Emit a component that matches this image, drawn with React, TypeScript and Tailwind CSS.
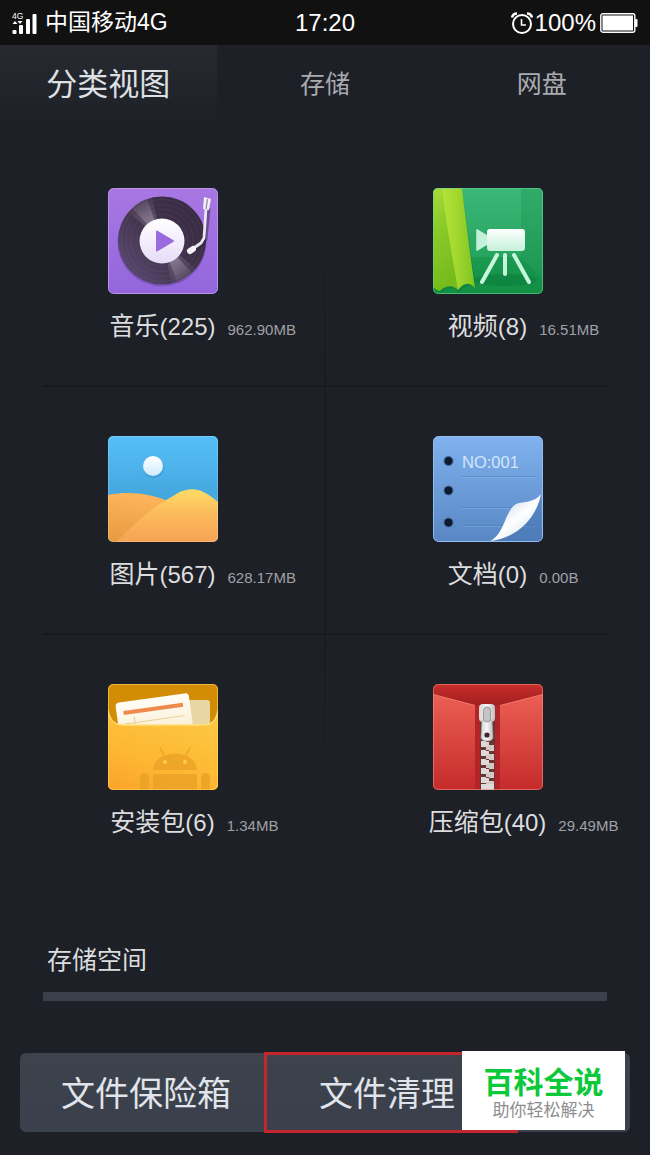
import React from 'react';

interface Category {
  id: string;
  name: string;
  count: number;
  size: string;
  icon: React.ReactNode;
}

const MusicIcon = () => (
  <svg viewBox="0 0 110 106" className="block h-full w-full" aria-hidden="true">
    <defs>
      <linearGradient id="musicBg" x1="0" y1="0" x2="0" y2="1">
        <stop offset="0" stopColor="#a877e2" />
        <stop offset="1" stopColor="#9366dd" />
      </linearGradient>
      <linearGradient id="vinyl" x1="0.2" y1="0.85" x2="0.9" y2="0.25">
        <stop offset="0" stopColor="#54446a" />
        <stop offset="0.5" stopColor="#403249" />
        <stop offset="1" stopColor="#3a2c46" />
      </linearGradient>
      <linearGradient id="hub" x1="0" y1="0" x2="0" y2="1">
        <stop offset="0" stopColor="#ffffff" />
        <stop offset="1" stopColor="#e6dcf8" />
      </linearGradient>
      <radialGradient id="shine" cx="54" cy="52.5" r="44" gradientUnits="userSpaceOnUse">
        <stop offset="0.4" stopColor="#9a8ea2" stopOpacity="0.75" />
        <stop offset="1" stopColor="#9a8ea2" stopOpacity="0.15" />
      </radialGradient>
    </defs>
    <rect x="0.5" y="0.5" width="109" height="105" rx="5" fill="url(#musicBg)" stroke="#b993e8" />
    <circle cx="54" cy="54" r="44.5" fill="#6d49a8" opacity="0.6" />
    <circle cx="54" cy="52.5" r="44" fill="url(#vinyl)" />
    <g fill="url(#shine)">
      <path d="M54 52.5 L24 20 A44 44 0 0 1 39 11 Z" />
      <path d="M54 52.5 L20 24 A44 44 0 0 1 44 10 Z" opacity="0.5" />
      <path d="M54 52.5 L84 85 A44 44 0 0 1 69 94 Z" />
      <path d="M54 52.5 L88 81 A44 44 0 0 1 64 95 Z" opacity="0.5" />
    </g>
    <g fill="none" stroke="#8a7b96" strokeOpacity="0.12">
      <circle cx="54" cy="52.5" r="41" />
      <circle cx="54" cy="52.5" r="36" />
      <circle cx="54" cy="52.5" r="31" />
      <circle cx="54" cy="52.5" r="26" />
    </g>
    <circle cx="54" cy="53" r="22.5" fill="url(#hub)" />
    <path d="M49 43.5 L65 53 L49 62.5 Z" fill="#9a6bdc" stroke="#9a6bdc" strokeWidth="2" strokeLinejoin="round" />
    <path d="M101 20 L98 51 L95 56 L85 64" fill="none" stroke="#2d2138" strokeOpacity="0.45" strokeWidth="3" />
    <path d="M98 20 L96 50 L93 55 L83 62" fill="none" stroke="#e9e6ee" strokeWidth="2.8" strokeLinejoin="round" />
    <path d="M96 9 L103 11 L101 22 L95 21 Z" fill="#f1eff4" />
    <path d="M99.5 11 L98 21" stroke="#9387a2" strokeWidth="1.3" />
    <path d="M85 61 L82 63" stroke="#f5f3f8" strokeWidth="6" strokeLinecap="round" />
  </svg>
);

const VideoIcon = () => (
  <svg viewBox="0 0 110 106" className="block h-full w-full" aria-hidden="true">
    <defs>
      <linearGradient id="videoBg" x1="0" y1="0" x2="0" y2="1">
        <stop offset="0" stopColor="#3bb878" />
        <stop offset="0.65" stopColor="#27a45f" />
        <stop offset="1" stopColor="#159048" />
      </linearGradient>
      <linearGradient id="curtainBack" x1="0" y1="0" x2="0.2" y2="1">
        <stop offset="0" stopColor="#a9dc3a" />
        <stop offset="0.4" stopColor="#8bcb2a" />
        <stop offset="1" stopColor="#76bb1c" />
      </linearGradient>
      <linearGradient id="curtainFold" x1="0" y1="0" x2="1" y2="0">
        <stop offset="0" stopColor="#b4e238" />
        <stop offset="0.45" stopColor="#a2d82f" />
        <stop offset="1" stopColor="#7fc422" />
      </linearGradient>
      <linearGradient id="camera" x1="0" y1="0" x2="0" y2="1">
        <stop offset="0" stopColor="#ffffff" />
        <stop offset="1" stopColor="#c4f1d9" />
      </linearGradient>
      <clipPath id="videoClip">
        <rect width="110" height="106" rx="5" />
      </clipPath>
    </defs>
    <g clipPath="url(#videoClip)">
      <rect width="110" height="106" fill="url(#videoBg)" />
      <rect x="88" width="22" height="106" fill="#169049" opacity="0.3" />
      <path d="M0 69 H88 L110 92 V106 H0 Z" fill="#0f8d43" opacity="0.45" />
      <ellipse cx="72" cy="92" rx="32" ry="6" fill="#087a37" opacity="0.5" />
      <path d="M0 0 H29 C33 34 38 66 43 100 C37 96 31 98 26 104 C20 98 14 99 8 105 L0 102 Z" fill="#0b7a35" opacity="0.5" />
      <path d="M0 0 H20 L25 102 C20 97 13 97 7 103 C5 103 2 101 0 99 Z" fill="url(#curtainBack)" />
      <path d="M9 0 H29 C33 34 37 66 42 100 C36 93 30 95 25 102 C20 72 13 36 9 0 Z" fill="url(#curtainFold)" />
      <path d="M44 42 L54 48 V56 L44 62 Z" fill="#c4f1d9" stroke="#c4f1d9" strokeWidth="1.5" strokeLinejoin="round" />
      <rect x="54" y="41" width="38" height="22" rx="3" fill="url(#camera)" />
      <path d="M64 67 L49 94 M81 67 L96 94 M72 67 V86" stroke="#c6f6db" strokeWidth="4" strokeLinecap="round" />
    </g>
    <rect x="0.5" y="0.5" width="109" height="105" rx="5" fill="none" stroke="#68cf8f" strokeOpacity="0.65" />
  </svg>
);

const PictureIcon = () => (
  <svg viewBox="0 0 110 106" className="block h-full w-full" aria-hidden="true">
    <defs>
      <linearGradient id="sky" x1="0" y1="0" x2="0" y2="1">
        <stop offset="0" stopColor="#56bff8" />
        <stop offset="0.6" stopColor="#43a6dc" />
      </linearGradient>
      <linearGradient id="duneBack" x1="0.2" y1="0" x2="0" y2="1">
        <stop offset="0" stopColor="#fdb45a" />
        <stop offset="1" stopColor="#e69a40" />
      </linearGradient>
      <linearGradient id="duneFront" x1="0" y1="0" x2="0" y2="1">
        <stop offset="0" stopColor="#fedb66" />
        <stop offset="0.5" stopColor="#fcb95c" />
        <stop offset="1" stopColor="#f5a354" />
      </linearGradient>
      <linearGradient id="sun" x1="0" y1="0" x2="0" y2="1">
        <stop offset="0" stopColor="#ffffff" />
        <stop offset="1" stopColor="#cfeafd" />
      </linearGradient>
      <clipPath id="pictureClip">
        <rect width="110" height="106" rx="5" />
      </clipPath>
    </defs>
    <g clipPath="url(#pictureClip)">
      <rect width="110" height="106" fill="url(#sky)" />
      <circle cx="45.5" cy="31.5" r="10.5" fill="#2b83b9" opacity="0.35" />
      <circle cx="45" cy="30" r="10" fill="url(#sun)" />
      <path d="M0 59 C20 55 42 57 62 66 L40 106 H0 Z" fill="url(#duneBack)" />
      <path d="M8 106 C30 84 48 69 70 57 C84 50 95 53 110 66 V106 Z" fill="url(#duneFront)" />
    </g>
    <rect x="0.5" y="0.5" width="109" height="105" rx="5" fill="none" stroke="#ffffff" strokeOpacity="0.18" />
  </svg>
);

const DocumentIcon = () => (
  <svg viewBox="0 0 110 106" className="block h-full w-full" aria-hidden="true">
    <defs>
      <linearGradient id="docBg" x1="0" y1="0" x2="0" y2="1">
        <stop offset="0" stopColor="#7fb2ee" />
        <stop offset="1" stopColor="#5887c4" />
      </linearGradient>
      <linearGradient id="curl" x1="0.2" y1="0.2" x2="0.8" y2="0.9">
        <stop offset="0" stopColor="#cfdcea" />
        <stop offset="0.5" stopColor="#ffffff" />
        <stop offset="1" stopColor="#d7e2ef" />
      </linearGradient>
    </defs>
    <rect x="0.5" y="0.5" width="109" height="105" rx="5" fill="url(#docBg)" stroke="#94bdf0" />
    <path d="M29 40.5 H103 M29 71.5 H103 M29 89.5 H103" stroke="#4a7ab9" strokeOpacity="0.5" />
    <path d="M29 41.5 H103 M29 72.5 H103 M29 90.5 H103" stroke="#a3c9f5" strokeOpacity="0.3" />
    <g fill="#0e1b2e" stroke="#44699c">
      <circle cx="15.5" cy="25" r="4.5" />
      <circle cx="15.5" cy="54.5" r="4.5" />
      <circle cx="15.5" cy="86.5" r="4.5" />
    </g>
    <text x="29" y="32" fontSize="16.5" fill="#d3e5fa" className="font-['Liberation_Sans',sans-serif]">NO:001</text>
    <path d="M57 105 C82 98 99 79 108 58 L109 101 Q109 105 104 105 Z" fill="#3c6ba8" opacity="0.4" />
    <path d="M57 105 C72 98 71 76 83 68 C92 65 101 67 108 58 C104 80 86 102 57 105 Z" fill="url(#curl)" />
  </svg>
);

const PackageIcon = () => (
  <svg viewBox="0 0 110 106" className="block h-full w-full" aria-hidden="true">
    <defs>
      <linearGradient id="pocket" x1="0.6" y1="0" x2="0.1" y2="1">
        <stop offset="0" stopColor="#fdc740" />
        <stop offset="0.6" stopColor="#fdb733" />
        <stop offset="1" stopColor="#fba52b" />
      </linearGradient>
      <linearGradient id="paper" x1="0" y1="0" x2="0" y2="1">
        <stop offset="0" stopColor="#fffdf7" />
        <stop offset="1" stopColor="#f8e9c6" />
      </linearGradient>
      <clipPath id="packageClip">
        <rect width="110" height="106" rx="5" />
      </clipPath>
    </defs>
    <g clipPath="url(#packageClip)">
      <rect width="110" height="106" fill="#d28c06" />
      <rect x="70" y="16" width="32" height="34" rx="3" fill="#e8d6a5" />
      <g transform="rotate(-8 45 30)">
        <rect x="9" y="14" width="74" height="50" rx="4" fill="url(#paper)" />
        <path d="M16 25 H76" stroke="#ee8a4b" strokeWidth="4" />
        <path d="M16 36 H76 M26 30 V50" stroke="#ecc993" strokeWidth="1" />
      </g>
      <path d="M0 26 C2 38 8 41 16 41 H94 C103 41 108 38 110 26 V106 H0 Z" fill="url(#pocket)" />
      <path d="M0 26 C2 38 8 41 16 41 H94 C103 41 108 38 110 26" fill="none" stroke="#ffe07f" strokeWidth="1.4" />
      <g fill="#e9a126" opacity="0.75">
        <path d="M45 86 C46 64 88 64 89 86 Z" />
        <rect x="45" y="90" width="44" height="16" />
        <rect x="32" y="89" width="9" height="20" rx="4.5" />
        <rect x="93" y="89" width="9" height="20" rx="4.5" />
        <path d="M56 71 L52 64 M78 71 L82 64" stroke="#e9a126" strokeWidth="1.6" strokeLinecap="round" />
      </g>
      <circle cx="57" cy="78" r="2" fill="#fecb56" />
      <circle cx="77" cy="78" r="2" fill="#fecb56" />
    </g>
    <rect x="0.5" y="0.5" width="109" height="105" rx="5" fill="none" stroke="#ffd264" strokeOpacity="0.6" />
  </svg>
);

const ZipIcon = () => {
  const teeth = [57, 66, 75, 84, 93];

  return (
    <svg viewBox="0 0 110 106" className="block h-full w-full" aria-hidden="true">
      <defs>
        <linearGradient id="zipFront" x1="0" y1="0" x2="0" y2="1">
          <stop offset="0" stopColor="#ec5f53" />
          <stop offset="1" stopColor="#c42b2b" />
        </linearGradient>
        <linearGradient id="zipBack" x1="0" y1="0" x2="0" y2="1">
          <stop offset="0" stopColor="#c92e2b" />
          <stop offset="0.25" stopColor="#961b1d" />
        </linearGradient>
        <linearGradient id="metal" x1="0" y1="0" x2="1" y2="0">
          <stop offset="0" stopColor="#d6d6d6" />
          <stop offset="0.5" stopColor="#f6f6f6" />
          <stop offset="1" stopColor="#bdbdbd" />
        </linearGradient>
        <clipPath id="zipClip">
          <rect width="110" height="106" rx="5" />
        </clipPath>
      </defs>
      <g clipPath="url(#zipClip)">
        <rect width="110" height="106" fill="url(#zipBack)" />
        <path d="M0 10 L42 21 V106 H0 Z M110 10 L67 21 V106 H110 Z" fill="url(#zipFront)" />
        <path d="M0 10.5 L42 21.5 M110 10.5 L67 21.5" stroke="#f58075" strokeOpacity="0.7" />
        <rect x="42" y="21" width="25" height="85" fill="#b12427" />
        <rect x="47" y="30" width="15" height="76" fill="#6b3534" />
        {teeth.map((y) => (
          <g key={y}>
            <path d={`M48 ${y} h5 v1 h3 v4 h-3 v1 h-5 Z`} fill="#dfdad8" />
            <path d={`M61 ${y + 4} h-5 v1 h-3 v4 h3 v1 h5 Z`} fill="#cfc9c7" />
          </g>
        ))}
        <rect x="48" y="100" width="13" height="6" fill="#dedad8" />
        <rect x="46" y="20" width="16" height="18" rx="4" fill="url(#metal)" />
        <path d="M49 36 H59 L60 53 Q60 57 54 57 Q48 57 48 53 Z" fill="url(#metal)" stroke="#a9a2a1" strokeWidth="0.6" />
        <rect x="50.5" y="23" width="7" height="15" rx="3.5" fill="#c4c4c4" stroke="#9b9796" />
        <circle cx="54" cy="51" r="2.6" fill="#3e2727" />
      </g>
      <rect x="0.5" y="0.5" width="109" height="105" rx="5" fill="none" stroke="#f08a7f" strokeOpacity="0.6" />
    </svg>
  );
};

const categories: Category[] = [
  { id: 'music', name: '音乐', count: 225, size: '962.90MB', icon: <MusicIcon /> },
  { id: 'video', name: '视频', count: 8, size: '16.51MB', icon: <VideoIcon /> },
  { id: 'picture', name: '图片', count: 567, size: '628.17MB', icon: <PictureIcon /> },
  { id: 'document', name: '文档', count: 0, size: '0.00B', icon: <DocumentIcon /> },
  { id: 'package', name: '安装包', count: 6, size: '1.34MB', icon: <PackageIcon /> },
  { id: 'zip', name: '压缩包', count: 40, size: '29.49MB', icon: <ZipIcon /> },
];

const StatusBar: React.FC = () => (
  <header className="grid h-[45px] grid-cols-[1fr_auto_1fr] items-center bg-[#111111] px-3 text-2xl text-white">
    <div className="flex items-center gap-2 text-[23px]">
      <svg width="25" height="24" viewBox="0 0 25 24" fill="#ffffff" aria-hidden="true">
        <text x="0" y="8" fontSize="8.5" className="font-['Liberation_Sans',sans-serif]">4G</text>
        <path d="M0.5 13 L3 10 L5.5 13 Z M5.5 10 H10.5 L8 13 Z" />
        <rect x="0.5" y="19" width="4" height="4" rx="1" />
        <rect x="7" y="14" width="4" height="9" rx="1" />
        <rect x="14" y="8" width="4" height="15" rx="1" />
        <rect x="20.5" y="3" width="4" height="20" rx="1" />
      </svg>
      <span>中国移动4G</span>
    </div>
    <time>17:20</time>
    <div className="flex items-center justify-end gap-1">
      <div className="flex items-center gap-px">
        <svg width="24" height="24" viewBox="0 0 24 24" fill="none" stroke="#ffffff" aria-hidden="true">
          <circle cx="12" cy="13" r="9" strokeWidth="2" />
          <path d="M11.5 8 V14 H16" strokeWidth="1.6" />
          <path d="M2 6.5 Q3 2.5 7 2.5 M22 6.5 Q21 2.5 17 2.5" strokeWidth="2.6" />
        </svg>
        <span>100%</span>
      </div>
      <svg width="38" height="20" viewBox="0 0 38 20" aria-hidden="true">
        <rect x="0.8" y="0.8" width="34" height="18.4" rx="2" fill="none" stroke="#ffffff" strokeWidth="1.4" />
        <rect x="2.5" y="2.5" width="30.5" height="15" fill="#ffffff" />
        <rect x="35" y="6" width="2.5" height="8" rx="1" fill="#ffffff" />
      </svg>
    </div>
  </header>
);

const CategoryCell: React.FC<{ item: Category }> = ({ item }) => (
  <a href={`#${item.id}`} className="flex h-[248px] flex-col items-center gap-3 pt-[51px]">
    <div className="h-[106px] w-[110px]">{item.icon}</div>
    <div className="grid w-full grid-cols-[1fr_auto_1fr] items-baseline gap-3 whitespace-nowrap">
      <span className="col-start-2 text-[25px] leading-10 text-[#dcdddf]">
        {item.name}
        <span className="text-2xl leading-10">({item.count})</span>
      </span>
      <span className="text-[15px] text-[#a0a1a4]">{item.size}</span>
    </div>
  </a>
);

const App: React.FC = () => {
  return (
    <div className="min-h-screen bg-[#1e2028] font-['Liberation_Sans','Noto_Sans_CJK_SC',sans-serif]">
      <StatusBar />

      <nav className="grid h-20 grid-cols-3 text-[25px] text-[#a9abaf]">
        <button className="bg-linear-to-b from-[#272a30] to-[#1e2028] text-[31px] text-[#dfe0e3]">分类视图</button>
        <button>存储</button>
        <button>网盘</button>
      </nav>

      <main className="pt-3">
        <div className="relative grid grid-cols-2">
          {categories.map((item) => (
            <CategoryCell key={item.id} item={item} />
          ))}
          {/* separators between the cells */}
          <div className="absolute inset-y-0 left-1/2 w-[2px] -translate-x-1/2 bg-linear-to-b from-transparent via-[#191a1f] to-transparent" />
          <div className="absolute inset-x-[43px] top-1/3 h-[2px] bg-[#191a1f]" />
          <div className="absolute inset-x-[43px] top-2/3 h-[2px] bg-[#191a1f]" />
        </div>

        <section className="px-[43px] pt-[59px]">
          <h2 id="storage" className="px-1 text-[25px] leading-10 text-[#dcdddf]">存储空间</h2>
          <div role="progressbar" aria-labelledby="storage" className="mt-3 h-[9px] bg-[#3b414b]" />
        </section>
      </main>

      <footer className="relative mx-5 mt-[51px] mb-[22px] flex h-[81px] text-[34px] text-[#e1e4ea]">
        <div className="my-px flex flex-1 overflow-hidden rounded-md bg-linear-to-b from-[#3c434c] to-[#3a404c]">
          <button className="w-2/5 pt-1 pl-2">文件保险箱</button>
        </div>
        <div className="absolute inset-y-0 left-2/5 flex w-5/12">
          <button className="flex-1 border-3 border-[#c4262e] pt-1 pr-2">文件清理</button>
        </div>
        <aside className="absolute -top-px right-[5px] flex h-[79px] w-[163px] flex-col items-center justify-center bg-white pt-2">
          <strong className="text-[30px] leading-8 font-bold text-[#0bc93a]">百科全说</strong>
          <span className="text-[17px] leading-6 text-[#8d8d8d]">助你轻松解决</span>
        </aside>
      </footer>
    </div>
  );
};

export default App;
